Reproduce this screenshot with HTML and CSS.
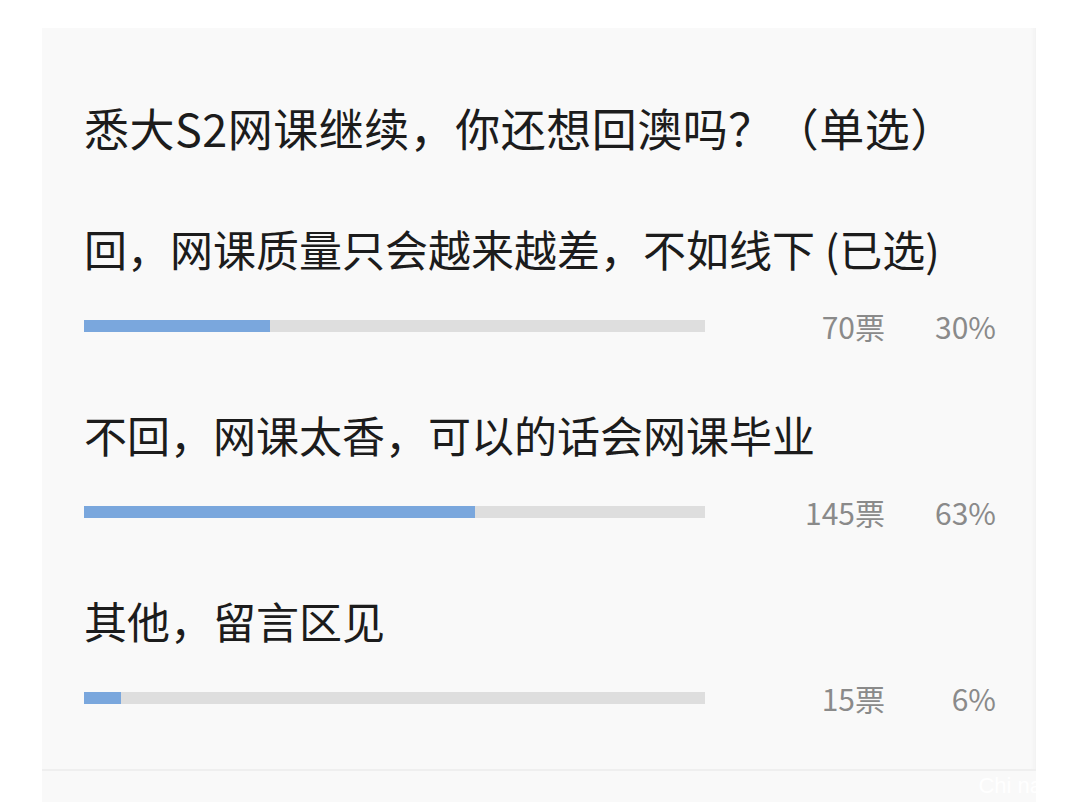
FILE: index.html
```html
<!DOCTYPE html>
<html>
<head>
  <meta charset="utf-8">
  <title>投票</title>
  <link rel="stylesheet" href="styles.css">
</head>
<body>
  <div class="poll">
    <h1 class="poll-title">悉大S2网课继续，你还想回澳吗？（单选）</h1>

    <div class="option">
      <div class="option-label">回，网课质量只会越来越差，不如线下 (已选)</div>
      <div class="option-row">
        <div class="bar"><div class="bar-fill" style="width: 30%"></div></div>
        <span class="votes">70票</span>
        <span class="percent">30%</span>
      </div>
    </div>

    <div class="option">
      <div class="option-label">不回，网课太香，可以的话会网课毕业</div>
      <div class="option-row">
        <div class="bar"><div class="bar-fill" style="width: 63%"></div></div>
        <span class="votes">145票</span>
        <span class="percent">63%</span>
      </div>
    </div>

    <div class="option">
      <div class="option-label">其他，留言区见</div>
      <div class="option-row">
        <div class="bar"><div class="bar-fill" style="width: 6%"></div></div>
        <span class="votes">15票</span>
        <span class="percent">6%</span>
      </div>
    </div>
  </div>
  <div class="poll-next">
    <span class="watermark">Chi na</span>
  </div>
</body>
</html>
```

FILE: styles.css
```css
:root {
  --card: #f9f9f9;
  --text: #1c1c1c;
  --muted: #8a8a8a;
  --track: #dedede;
  --fill: #7aa7dd;
  --font: "Noto Sans CJK SC", "Noto Sans", sans-serif;
}
html, body {
  height: 100%;
}
body {
  margin: 0;
  background: #fff;
  font-family: var(--font);
  color: var(--text);
  overflow: hidden;
}
.poll {
  margin: 28px 0 0 42px;
  width: 994px;
  height: 743px;
  box-sizing: border-box;
  padding: 70px 0 0 42px;
  background: var(--card);
  border-bottom: 2px solid #efefef;
  box-shadow: inset -6px 0 4px -4px #f1f1f1;
}
.poll-title {
  margin: 0 0 60px;
  font-size: 45px;
  font-weight: normal;
  letter-spacing: 0.5px;
  line-height: 60px;
  height: 60px;
}
.option {
  margin-bottom: 58px;
}
.option-label {
  font-size: 43px;
  line-height: 60px;
  height: 60px;
}
.option-row {
  display: flex;
  align-items: center;
  height: 40px;
  margin-top: 28px;
  color: var(--muted);
  font-size: 30px;
}
.bar {
  width: 621px;
  height: 12px;
  background: var(--track);
}
.bar-fill {
  height: 100%;
  background: var(--fill);
}
.votes {
  width: 180px;
  text-align: right;
}
.percent {
  width: 111px;
  text-align: right;
}
.poll-next {
  margin-left: 42px;
  width: 994px;
  height: 40px;
  background: var(--card);
  position: relative;
}
.watermark {
  position: absolute;
  right: -6px;
  top: 2px;
  font-family: "Liberation Sans", sans-serif;
  font-size: 22px;
  color: #fff;
}
```
